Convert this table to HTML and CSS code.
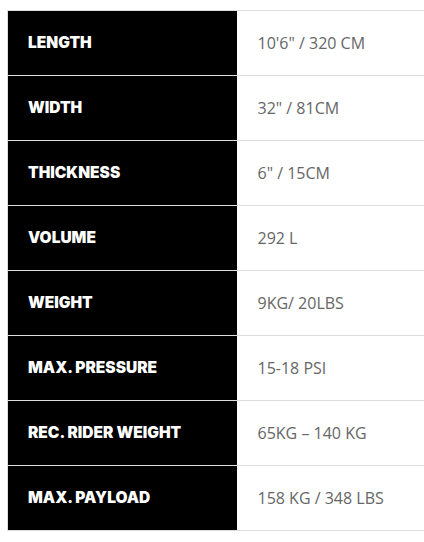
FILE: index.html
```html
<!DOCTYPE html>
<html>
<head>
<meta charset="utf-8">
<link rel="stylesheet" href="styles.css">
</head>
<body>
<table class="specs">
  <tr><th>LENGTH</th><td>10'6" / 320 CM</td></tr>
  <tr><th>WIDTH</th><td>32" / 81CM</td></tr>
  <tr><th>THICKNESS</th><td>6" / 15CM</td></tr>
  <tr><th>VOLUME</th><td>292 L</td></tr>
  <tr><th>WEIGHT</th><td>9KG/ 20LBS</td></tr>
  <tr><th>MAX. PRESSURE</th><td>15-18 PSI</td></tr>
  <tr><th>REC. RIDER WEIGHT</th><td>65KG – 140 KG</td></tr>
  <tr><th>MAX. PAYLOAD</th><td>158 KG / 348 LBS</td></tr>
</table>
</body>
</html>
```
FILE: styles.css
```css
html, body {
  margin: 0;
  padding: 0;
  background: #fff;
}
body {
  padding: 10px 0 0 7px;
}
.specs {
  border-collapse: collapse;
  width: 417px;
  border-left: 1px solid #ddd;
  border-top: 1px solid #ddd;
}
.specs tr {
  height: 65px;
}
.specs th, .specs td {
  border-bottom: 1px solid #ddd;
  padding: 0 0 1px 20px;
  text-align: left;
  vertical-align: middle;
  height: 64px;
  box-sizing: border-box;
}
.specs th {
  background: #000;
  color: #fff;
  width: 229px;
  font-family: "Inter", sans-serif;
  font-weight: 900;
  font-size: 15.5px;
  letter-spacing: 0;
}
.specs td {
  color: #666;
  font-family: "Open Sans", sans-serif;
  font-size: 16px;
  padding-left: 21px;
}
```
